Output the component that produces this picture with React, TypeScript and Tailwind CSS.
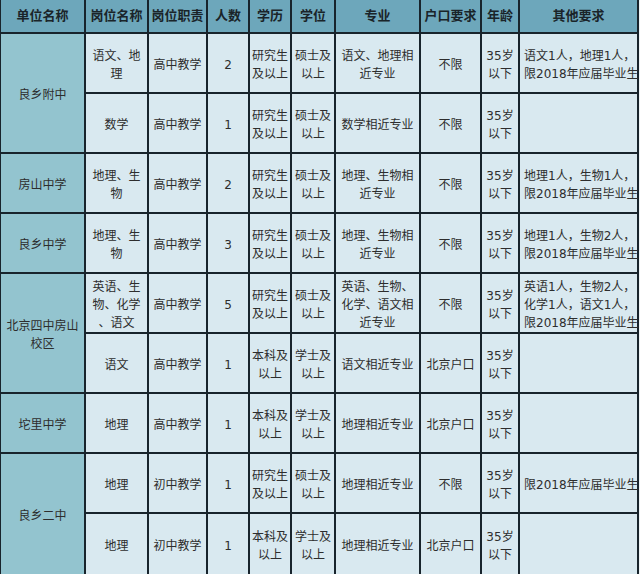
import type { ReactNode } from "react"

type Row = {
    school?: string[]
    span?: number
    post: string[]
    duty: string
    count: string
    edu: string[]
    degree: string[]
    major: string[]
    hukou: string
    age: string[]
    other: string[]
}

const headers = ["单位名称", "岗位名称", "岗位职责", "人数", "学历", "学位", "专业", "户口要求", "年龄", "其他要求"]

const grad = ["研究生", "及以上"]
const master = ["硕士及", "以上"]
const bachelorEdu = ["本科及", "以上"]
const bachelor = ["学士及", "以上"]
const age35 = ["35岁", "以下"]

const rows: Row[] = [
    { school: ["良乡附中"], span: 2, post: ["语文、地", "理"], duty: "高中教学", count: "2", edu: grad, degree: master, major: ["语文、地理相", "近专业"], hukou: "不限", age: age35, other: ["语文1人，地理1人，", "限2018年应届毕业生"] },
    { post: ["数学"], duty: "高中教学", count: "1", edu: grad, degree: master, major: ["数学相近专业"], hukou: "不限", age: age35, other: [] },
    { school: ["房山中学"], post: ["地理、生", "物"], duty: "高中教学", count: "2", edu: grad, degree: master, major: ["地理、生物相", "近专业"], hukou: "不限", age: age35, other: ["地理1人，生物1人，", "限2018年应届毕业生"] },
    { school: ["良乡中学"], post: ["地理、生", "物"], duty: "高中教学", count: "3", edu: grad, degree: master, major: ["地理、生物相", "近专业"], hukou: "不限", age: age35, other: ["地理1人，生物2人，", "限2018年应届毕业生"] },
    { school: ["北京四中房山", "校区"], span: 2, post: ["英语、生", "物、化学", "、语文"], duty: "高中教学", count: "5", edu: grad, degree: master, major: ["英语、生物、", "化学、语文相", "近专业"], hukou: "不限", age: age35, other: ["英语1人，生物2人，", "化学1人，语文1人，", "限2018年应届毕业生"] },
    { post: ["语文"], duty: "高中教学", count: "1", edu: bachelorEdu, degree: bachelor, major: ["语文相近专业"], hukou: "北京户口", age: age35, other: [] },
    { school: ["坨里中学"], post: ["地理"], duty: "高中教学", count: "1", edu: bachelorEdu, degree: bachelor, major: ["地理相近专业"], hukou: "北京户口", age: age35, other: [] },
    { school: ["良乡二中"], span: 2, post: ["地理"], duty: "初中教学", count: "1", edu: grad, degree: master, major: ["地理相近专业"], hukou: "不限", age: age35, other: ["限2018年应届毕业生"] },
    { post: ["地理"], duty: "初中教学", count: "1", edu: bachelorEdu, degree: bachelor, major: ["地理相近专业"], hukou: "北京户口", age: age35, other: [] },
]

function Lines({ lines }: { lines: string[] }) {
    return (
        <>
            {lines.map((line, i) => (
                <span key={i} className="block whitespace-nowrap">{line}</span>
            ))}
        </>
    )
}

function Cell({ children, className = "" }: { children?: ReactNode; className?: string }) {
    return (
        <div className={"flex flex-col items-center justify-center bg-[#d9e9f0] pt-[3px] text-center " + className}>
            {children}
        </div>
    )
}

export default function App() {
    return (
        <div className="h-[574px] w-[640px] overflow-hidden bg-[#eef4f6]">
            <div
                className="grid w-[639px] grid-cols-[83px_61px_57px_40px_40px_42px_83px_59px_36px_117px] grid-rows-[32px_repeat(8,58px)_60px] gap-[2px] bg-[#18242c] pl-px pr-[2px] text-[12px] leading-[18px] text-[#2d2d2d]"
                style={{ fontFamily: '"DejaVu Sans", "Noto Sans CJK SC", sans-serif' }}
            >
                {headers.map(label => (
                    <div key={label} className="flex items-center justify-center bg-[#6da7bb] text-[13px] font-bold text-[#1a2429]">
                        {label}
                    </div>
                ))}
                {rows.map((row, i) => (
                    <div key={i} className="contents">
                        {row.school && (
                            <div className={"flex flex-col items-center justify-center bg-[#93c4cf] pt-[3px] text-center " + (row.span === 2 ? "row-span-2" : "")}>
                                <Lines lines={row.school} />
                            </div>
                        )}
                        <Cell><Lines lines={row.post} /></Cell>
                        <Cell>{row.duty}</Cell>
                        <Cell>{row.count}</Cell>
                        <Cell><Lines lines={row.edu} /></Cell>
                        <Cell><Lines lines={row.degree} /></Cell>
                        <Cell><Lines lines={row.major} /></Cell>
                        <Cell>{row.hukou}</Cell>
                        <Cell><Lines lines={row.age} /></Cell>
                        <Cell className="!items-start pl-[4px] !text-left"><Lines lines={row.other} /></Cell>
                    </div>
                ))}
            </div>
        </div>
    )
}
